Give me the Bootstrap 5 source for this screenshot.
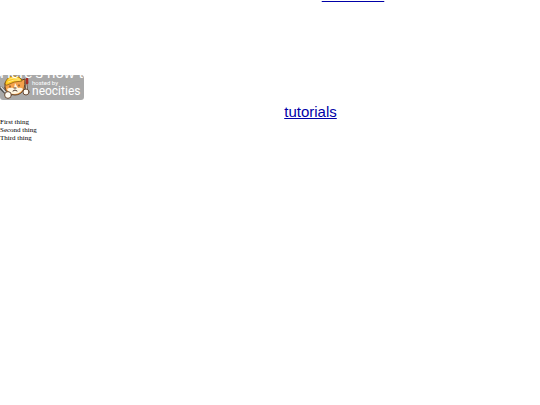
<!DOCTYPE html>
<html lang="en">
<head>
<meta charset="utf-8">
<meta name="viewport" content="width=device-width, initial-scale=1">
<title>Tutorials</title>
<link href="https://cdn.jsdelivr.net/npm/bootstrap@5.3.0/dist/css/bootstrap.min.css" rel="stylesheet">
<style>
body { background: #fff; color: #000; font-family: "Liberation Sans", Arial, sans-serif; font-size: 15px; line-height: 16px; }
a, a:hover { color: #0000a8; }
.top-link { margin-top: -13px; padding-left: 166px; }
.intro { color: #fff; padding-top: 62px; }
.host-badge { width: 84px; height: 25px; margin-top: -6px; background: #a9a9a9; border-radius: 3px; }
.host-badge, .host-badge:hover { color: #fff; }
.host-words { font-family: Roboto, "Open Sans", sans-serif; }
.host-small { font-size: 6px; line-height: 6px; }
.host-name { font-size: 12px; line-height: 10px; }
.intro-line { z-index: 1; }
.page-link-row { margin-top: 4px; padding-left: 81px; }
.things { font-family: "Liberation Serif", "Times New Roman", serif; font-size: 7px; line-height: 8px; margin-top: -2px; }
</style>
<script src="https://cdn.jsdelivr.net/npm/bootstrap@5.3.0/dist/js/bootstrap.bundle.min.js"></script>
</head>
<body class="overflow-x-hidden">
<nav class="top-link text-center"><a href="#about">about me</a></nav>
<main>
  <p class="intro intro-line position-relative mb-0">Here's how to</p>
  <a class="host-badge d-flex align-items-end text-decoration-none" href="#host">
    <svg width="32" height="25" viewBox="0 0 32 25" aria-hidden="true" class="flex-shrink-0">
      <g stroke-linecap="round" stroke-linejoin="round">
        <path d="M1 13 7 19" stroke="#555" stroke-width="3.4"/><path d="M1 12 7 19" stroke="#ddd" stroke-width="1.2"/>
        <path d="M27 7 26 18" stroke="#4d3b31" stroke-width="2.4"/><path d="M27 9 26 17" stroke="#d8c9b7" stroke-width="1.1"/>
        <path d="M27 4 27 8" stroke="#a82a22" stroke-width="2.6"/>
        <path d="M5 13 5 8Q8 2 15 2Q20 2 22 5L25 4Q25 10 24 14Q21 20 15 20Q7 20 5 13Z" fill="#f4a14a" stroke="#634124" stroke-width="1"/>
        <path d="M5 9Q6 2 13 1Q21 1 22 6Q14 6 7 10Z" fill="#ffc91f" stroke="#8d6014" stroke-width=".8"/>
        <path d="M9 4Q14 2 19 4M8 7Q14 4 20 5" fill="none" stroke="#fff2a0" stroke-width=".8"/>
        <path d="M7 14Q10 12 14 13L15 8 18 13Q21 12 23 14Q20 19 14 19Q9 19 7 14Z" fill="#fff5df"/>
        <path d="M10 11V12M19 10V11M14 13H16M13 16 15 15 17 16" fill="none" stroke="#493228" stroke-width="1"/>
        <circle cx="8" cy="20" r="3.4" fill="#fffaf0" stroke="#684a35"/><circle cx="26" cy="17" r="3" fill="#fffaf0" stroke="#684a35"/>
      </g>
    </svg>
    <span class="host-words d-flex flex-column pb-1 text-nowrap"><span class="host-small">hosted by</span><span class="host-name">neocities</span></span>
  </a>
  <p class="page-link-row text-center mb-0"><a href="#tutorials">tutorials</a></p>
  <ul class="things list-unstyled mb-0"><li>First thing</li><li>Second thing</li><li>Third thing</li></ul>
</main>
</body>
</html>
